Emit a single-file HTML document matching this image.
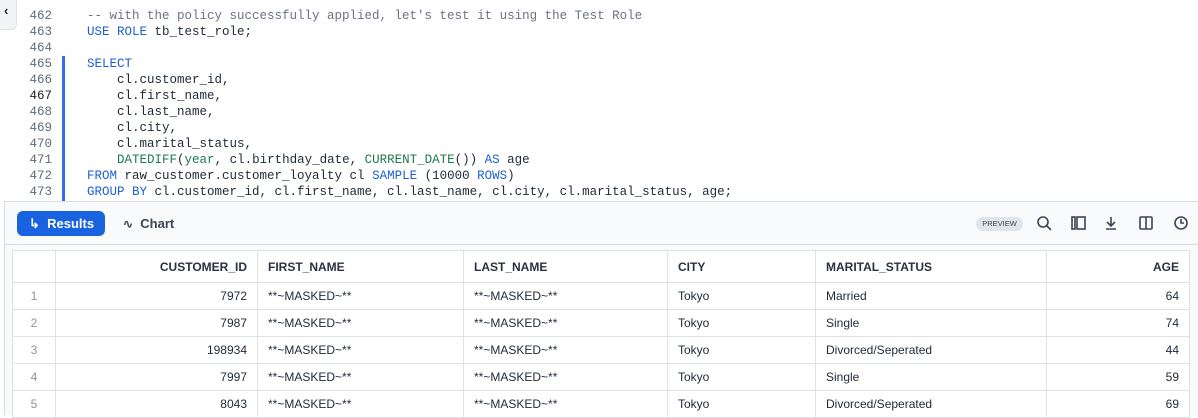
<!DOCTYPE html>
<html><head><style>
*{margin:0;padding:0;box-sizing:border-box}
body{width:1198px;height:415px;overflow:hidden;background:#fff;font-family:"Liberation Sans",sans-serif;position:relative}
.ed{position:absolute;left:0;top:2px;width:1198px;height:199px;background:#fff}
.ln{position:absolute;left:14px;width:38px;text-align:right;font:12.5px "Liberation Mono",monospace;color:#5f6b7a}
.cd{position:absolute;left:87px;font:12.5px "Liberation Mono",monospace;color:#1f2937;white-space:pre}
.k{color:#1a5fd6}.f{color:#1d7a4f}.c{color:#6b7280}
.bar{position:absolute;left:62px;top:54px;width:3px;height:147px;background:#2f6fe8}
.tb{position:absolute;left:4px;top:201px;width:1194px;height:214px;background:#f9fafb;border-top:1px solid #d9dde3;border-left:1px solid #d9dde3}
.tbl{position:absolute;left:12px;top:250px;width:1178px;border-collapse:collapse;background:#fff;font-size:12px;color:#1f2937}
.tbl td,.tbl th{border:1px solid #dfe3e8;height:27px;padding:0 10px}
.tbl th{height:32px;font-weight:bold;color:#2a3140;text-align:left}
.tbl .r{text-align:right}
.n{color:#8a94a3;text-align:center}
</style></head><body>
<div style="position:absolute;left:0;top:0;width:17px;height:30px;background:#f3f4f6;border-right:1px solid #dfe3e8;border-bottom:1px solid #dfe3e8;border-radius:0 0 6px 0;font:bold 13px 'Liberation Sans';color:#222;padding:3px 0 0 4px;z-index:2">&#8249;</div>
<div class="ed">
<div class="bar"></div>
<div class="ln" style="top:7px">462</div><div class="cd c" style="top:7px">-- with the policy successfully applied, let's test it using the Test Role</div>
<div class="ln" style="top:23px">463</div><div class="cd" style="top:23px"><span class="k">USE ROLE</span> tb_test_role;</div>
<div class="ln" style="top:39px">464</div>
<div class="ln" style="top:55px">465</div><div class="cd k" style="top:55px">SELECT</div>
<div class="ln" style="top:71px">466</div><div class="cd" style="top:71px">    cl.customer_id,</div>
<div class="ln" style="top:87px;color:#222">467</div><div class="cd" style="top:87px">    cl.first_name,</div>
<div class="ln" style="top:103px">468</div><div class="cd" style="top:103px">    cl.last_name,</div>
<div class="ln" style="top:119px">469</div><div class="cd" style="top:119px">    cl.city,</div>
<div class="ln" style="top:135px">470</div><div class="cd" style="top:135px">    cl.marital_status,</div>
<div class="ln" style="top:151px">471</div><div class="cd" style="top:151px">    <span class="f">DATEDIFF</span>(<span class="f">year</span>, cl.birthday_date, <span class="f">CURRENT_DATE</span>()) <span class="k">AS</span> age</div>
<div class="ln" style="top:167px">472</div><div class="cd" style="top:167px"><span class="k">FROM</span> raw_customer.customer_loyalty cl <span class="k">SAMPLE</span> (10000 <span class="k">ROWS</span>)</div>
<div class="ln" style="top:183px">473</div><div class="cd" style="top:183px"><span class="k">GROUP BY</span> cl.customer_id, cl.first_name, cl.last_name, cl.city, cl.marital_status, age;</div>
</div>
<div class="tb">
<div style="position:absolute;left:0;right:0;top:42px;border-top:1px solid #d9dde3"></div>
<div style="position:absolute;left:12px;top:9px;width:88px;height:25px;background:#1a63e0;border-radius:6px;color:#fff;font-weight:bold;font-size:13px;line-height:25px;padding-left:12px">&#8627;&nbsp; Results</div>
<div style="position:absolute;left:118px;top:9px;height:25px;line-height:25px;color:#3a4454;font-weight:bold;font-size:13px"><span style="font-size:12px">&#8767;</span>&nbsp; Chart</div>
<div style="position:absolute;left:971px;top:15px;width:47px;height:14px;border-radius:7px;background:#e1e5ea;font-size:7.5px;color:#3a4454;text-align:center;line-height:14px">PREVIEW</div>
<svg style="position:absolute;left:1030px;top:12px" width="170" height="20" fill="none" stroke="#3a4454" stroke-width="1.6">
<circle cx="8" cy="8" r="5"/><line x1="12" y1="12" x2="16" y2="16"/>
<rect x="37" y="3" width="3" height="12"/><rect x="42" y="3" width="8" height="12"/>
<path d="M76 3v9M72 8l4 4 4-4M71 15h10"/>
<rect x="105" y="3" width="12" height="12" rx="1"/><line x1="111" y1="3" x2="111" y2="15"/>
<circle cx="146" cy="9" r="6"/><path d="M146 5v4h3"/>
</svg>
</div>
<table class="tbl">
<tr><th style="width:43px"></th><th class="r" style="width:202px">CUSTOMER_ID</th><th style="width:206px">FIRST_NAME</th><th style="width:204px">LAST_NAME</th><th style="width:148px">CITY</th><th style="width:231px">MARITAL_STATUS</th><th class="r">AGE</th></tr>
<tr><td class="n">1</td><td class="r">7972</td><td>**~MASKED~**</td><td>**~MASKED~**</td><td>Tokyo</td><td>Married</td><td class="r">64</td></tr>
<tr><td class="n">2</td><td class="r">7987</td><td>**~MASKED~**</td><td>**~MASKED~**</td><td>Tokyo</td><td>Single</td><td class="r">74</td></tr>
<tr><td class="n">3</td><td class="r">198934</td><td>**~MASKED~**</td><td>**~MASKED~**</td><td>Tokyo</td><td>Divorced/Seperated</td><td class="r">44</td></tr>
<tr><td class="n">4</td><td class="r">7997</td><td>**~MASKED~**</td><td>**~MASKED~**</td><td>Tokyo</td><td>Single</td><td class="r">59</td></tr>
<tr><td class="n">5</td><td class="r">8043</td><td>**~MASKED~**</td><td>**~MASKED~**</td><td>Tokyo</td><td>Divorced/Seperated</td><td class="r">69</td></tr>
</table>
</body></html>
